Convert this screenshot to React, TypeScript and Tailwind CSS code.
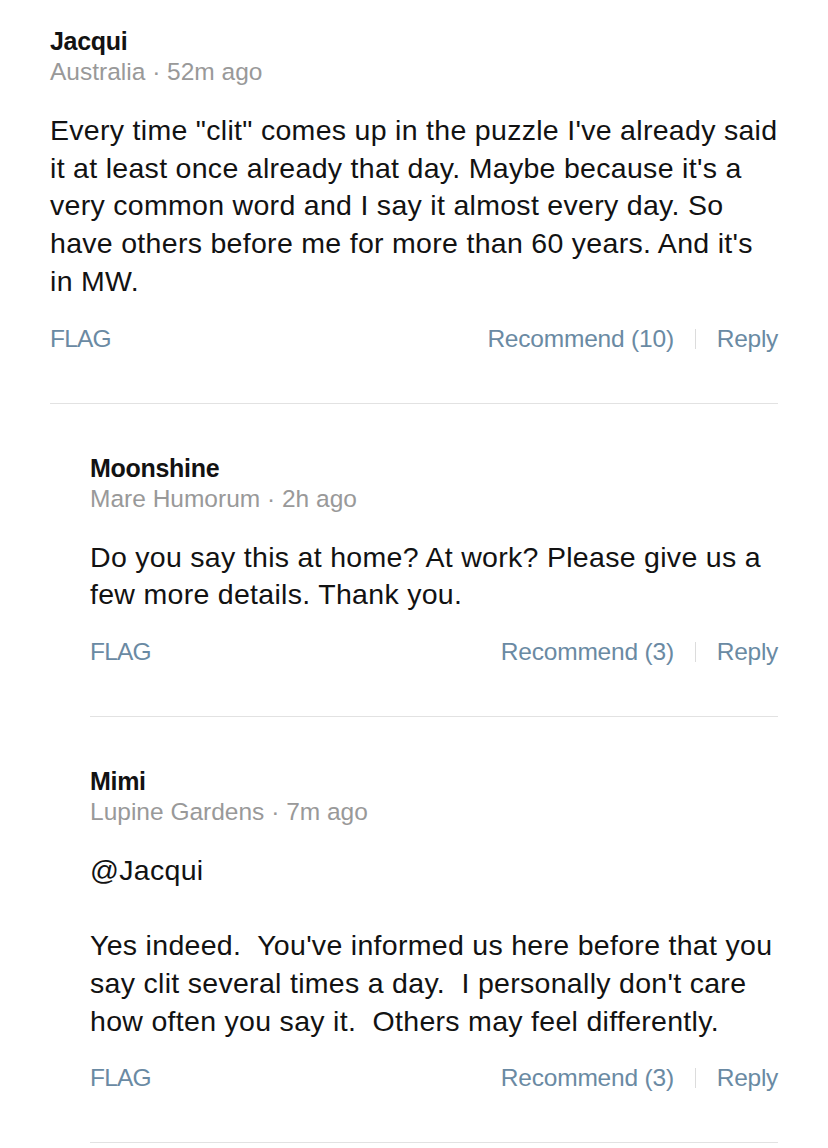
import React from "react";

type CommentProps = {
  name: string;
  location: string;
  time: string;
  body: React.ReactNode;
  recommends: number;
  nested?: boolean;
};

function Comment({ name, location, time, body, recommends, nested }: CommentProps) {
  return (
    <div className={nested ? "pl-[90px] pr-[50px]" : "px-[50px]"}>
      <div className={`${nested ? "pt-[49px]" : "pt-[26px]"} pb-[46px] border-b border-[#e2e2e2]`}>
        <div className="text-[25px] leading-[30px] font-bold text-[#121212] tracking-[-0.3px]">{name}</div>
        <div className="text-[24.5px] leading-[31px] text-[#999999]">
          {location} · {time}
        </div>
        <div className="mt-[25px] text-[28.5px] leading-[37.7px] tracking-[0.3px] text-[#121212]">{body}</div>
        <div className="mt-[20px] flex items-center text-[24.5px] leading-[36px] text-[#6a8aa3]">
          <span className="tracking-[-0.8px]">FLAG</span>
          <span className="ml-auto tracking-[-0.2px]">Recommend ({recommends})</span>
          <span className="mx-[21px] h-[20px] w-px bg-[#dcdcdc]" />
          <span className="tracking-[-0.3px]">Reply</span>
        </div>
      </div>
    </div>
  );
}

export default function App() {
  return (
    <div
      className="w-[828px] min-h-[1148px] bg-white overflow-hidden"
      style={{ fontFamily: '"Liberation Sans", Arial, sans-serif' }}
    >
      <Comment
        name="Jacqui"
        location="Australia"
        time="52m ago"
        recommends={10}
        body={
          <p>
            Every time "clit" comes up in the puzzle I've already said it at least once already that day. Maybe
            because it's a very common word and I say it almost every day. So have others before me for more than 60
            years. And it's in MW.
          </p>
        }
      />
      <Comment
        nested
        name="Moonshine"
        location="Mare Humorum"
        time="2h ago"
        recommends={3}
        body={<p>Do you say this at home? At work? Please give us a few more details. Thank you.</p>}
      />
      <Comment
        nested
        name="Mimi"
        location="Lupine Gardens"
        time="7m ago"
        recommends={3}
        body={
          <div className="whitespace-pre-wrap">
            {"@Jacqui\n\nYes indeed.  You've informed us here before that you say clit several times a day.  I personally don't care how often you say it.  Others may feel differently."}
          </div>
        }
      />
    </div>
  );
}
